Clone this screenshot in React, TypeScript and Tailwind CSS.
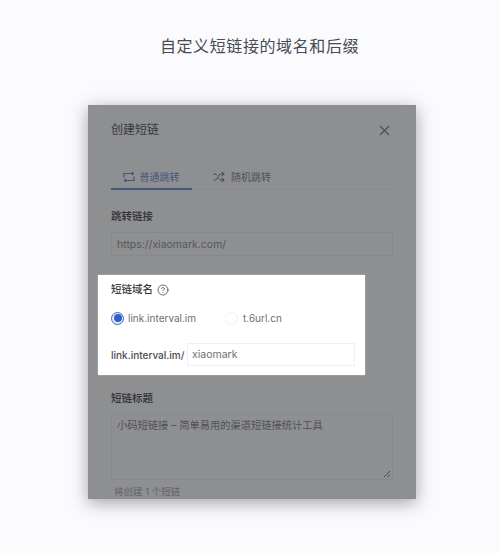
import { Shuffle, X, CircleHelp } from 'lucide-react'

const font = { fontFamily: '"Inter", "Noto Sans CJK SC", sans-serif' }

function LoopIcon() {
  return (
    <svg viewBox="0 0 12 12" className="mt-[2px] h-[12px] w-[12px]" fill="none" stroke="currentColor" strokeWidth="1.2">
      <path d="M1 6.5V2.5H10.5M8.8 1l1.7 1.5L8.8 4" />
      <path d="M11 5.5v4H1.5M3.2 8 1.5 9.5 3.2 11" />
    </svg>
  )
}

export default function App() {
  return (
    <div style={font} className="flex h-[553px] w-[500px] flex-col items-center overflow-hidden bg-[#fbfbfd]">
      <h1 className="mt-[33px] ml-[19px] h-[26px] text-[16px] leading-[26px] font-normal tracking-[0.6px] text-[#464b54]">
        自定义短链接的域名和后缀
      </h1>

      <div className="mt-[46px] ml-[4px] h-[394px] w-[328px] overflow-hidden bg-[#8e8f91] pt-[15px] pl-[23px] pr-[23px] shadow-[0_4px_16px_rgba(90,90,100,0.55)]">
        <div className="flex h-[20px] items-center justify-between text-[#37383c]">
          <span className="text-[12px] leading-[20px]">创建短链</span>
          <X size={17} strokeWidth={1.5} className="text-[#4c4d50]" />
        </div>

        <div className="mt-[26px] flex h-[24px] border-b border-[#88898b] text-[10px]">
          <div className="flex h-[24px] w-[81px] items-start justify-center gap-[5px] border-b-2 border-[#44567f] pt-[3px] pr-[1px] text-[#46557d]">
            <LoopIcon />
            <span className="leading-[16px]">普通跳转</span>
          </div>
          <div className="ml-[21px] flex items-start gap-[6px] pt-[3px] text-[#505156]">
            <Shuffle size={12} strokeWidth={1.8} className="mt-[2px] text-[#3f4044]" />
            <span className="leading-[16px]">随机跳转</span>
          </div>
        </div>

        <div className="mt-[19px] text-[10.5px] leading-[16px] font-medium text-[#2f3033]">跳转链接</div>
        <div className="mt-[7px] flex h-[24px] items-center border border-[#87888a] px-[5px] pt-[1px] text-[10.5px] text-[#55565a]">
          https://xiaomark.com/
        </div>

        <section className="mt-[19px] -ml-[13px] flex h-[100px] w-[267px] flex-col bg-white pl-[13px] shadow-[0_0_2px_rgba(255,255,255,0.4)]">
          <div className="mt-[7px] flex h-[16px] items-center gap-[4px] text-[10.5px] font-medium text-[#3a3b3e]">
            <span className="leading-[16px]">短链域名</span>
            <CircleHelp size={12} strokeWidth={1.5} />
          </div>
          <div className="mt-[12px] flex h-[16px] items-center text-[10px] text-[#6d6e72]">
            <span className="flex h-[13px] w-[13px] items-center justify-center rounded-full border border-[#3b66c4] bg-[#e6ecf8]">
              <span className="h-[8px] w-[8px] rounded-full bg-[#2f5fc7]" />
            </span>
            <span className="ml-[4px] w-[68px] leading-[16px] whitespace-nowrap">link.interval.im</span>
            <span className="ml-[29px] h-[13px] w-[13px] rounded-full border border-[#f0f0f1]" />
            <span className="ml-[5px] leading-[16px]">t.6url.cn</span>
          </div>
          <div className="mt-[17px] flex h-[23px] items-center">
            <span className="w-[75px] text-[10px] leading-[16px] font-medium whitespace-nowrap text-[#4a4b4f]">link.interval.im/</span>
            <div className="ml-[1px] flex h-[23px] w-[168px] items-center border border-[#f1f1f2] px-[4px] text-[10.5px] text-[#6f7074]">
              xiaomark
            </div>
          </div>
        </section>

        <div className="mt-[16px] text-[10.5px] leading-[16px] font-medium text-[#2f3033]">短链标题</div>
        <div className="relative mt-[7px] h-[66px] border border-[#87888a] px-[5px] py-[2px] text-[10.25px] leading-[16px] text-[#505155]">
          小码短链接 – 简单易用的渠道短链接统计工具
          <svg viewBox="0 0 8 8" className="absolute right-[1px] bottom-[1px] h-[8px] w-[8px]" fill="none" stroke="#3c3d40" strokeWidth="0.8">
            <path d="M1 7 7 1M4.5 7 7 4.5" />
          </svg>
        </div>
        <div className="mt-[5px] pl-[3px] text-[9.5px] leading-[14px] text-[#626367]">将创建 1 个短链</div>
      </div>
    </div>
  )
}
